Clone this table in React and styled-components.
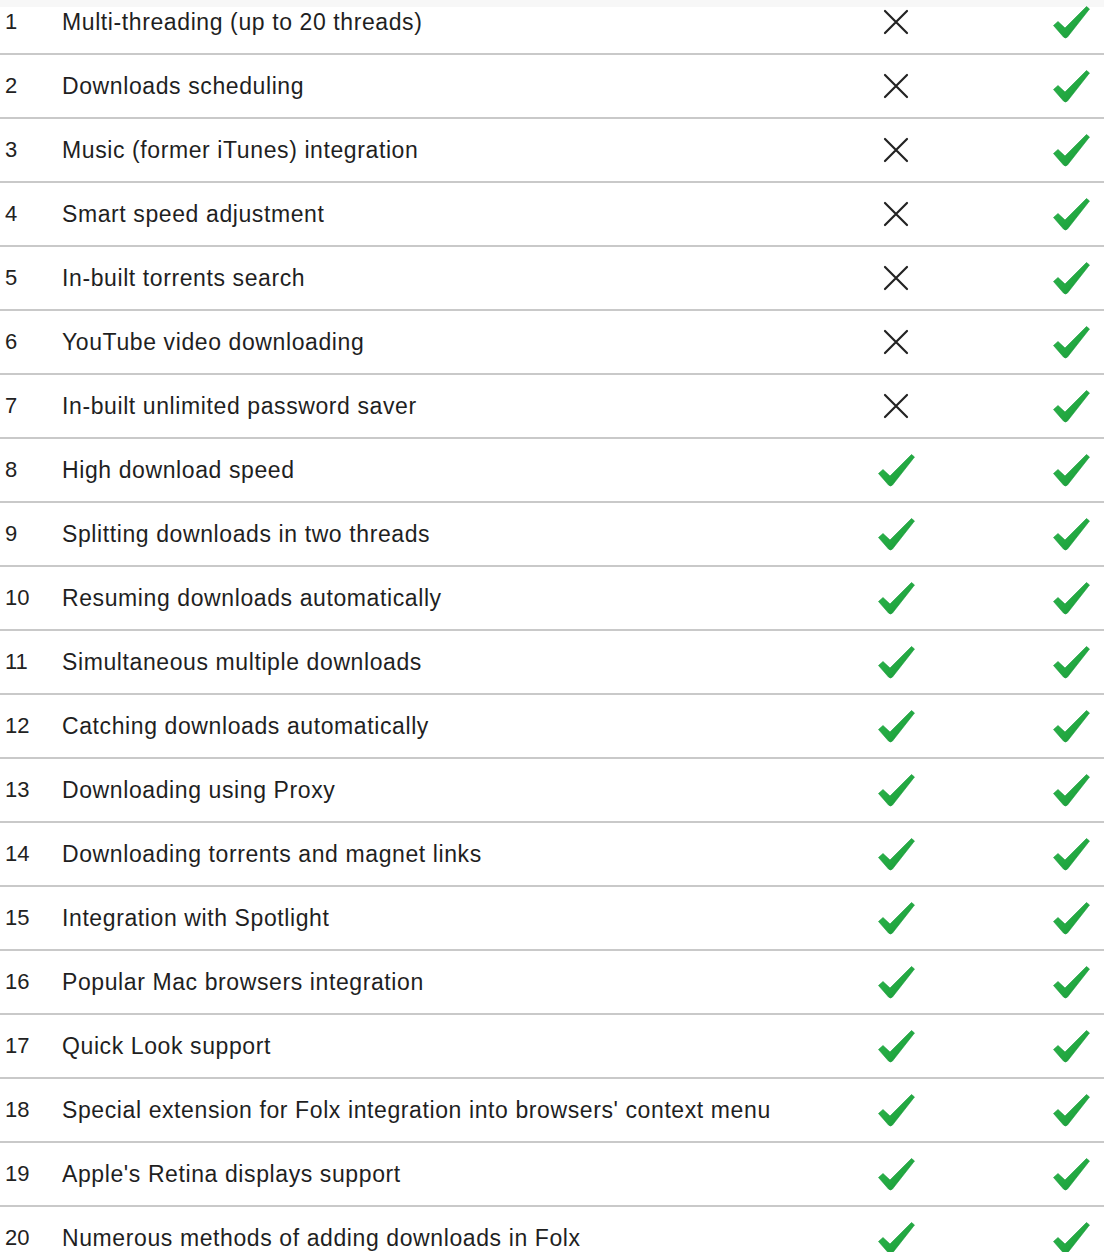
import React from 'react';
import styled, { createGlobalStyle } from 'styled-components';

const GlobalStyle = createGlobalStyle`
  html, body {
    margin: 0;
    padding: 0;
    background: #fff;
    overflow: hidden;
  }
  body {
    font-family: "Liberation Sans", Arial, sans-serif;
    color: #1f1f1f;
  }
`;

const Table = styled.div`
  margin-top: -9px;
  width: 1104px;
`;

const Row = styled.div`
  display: grid;
  grid-template-columns: 57px 1fr 110px 153px;
  align-items: center;
  height: 64px;
  box-sizing: border-box;
  padding-left: 5px;
  border-bottom: 2px solid #c9c9c9;
  background: ${p => (p.first ? 'linear-gradient(#f7f7f7 16px, #fff 16px)' : '#fff')};
`;

const Num = styled.div`
  font-size: 22px;
  color: #222;
`;

const Feature = styled.div`
  font-size: 23px;
  letter-spacing: 0.6px;
  color: #1f1f1f;
  white-space: nowrap;
`;

const IconCell = styled.div`
  display: flex;
  align-items: center;
  justify-content: ${p => (p.end ? 'flex-end' : 'center')};
  padding-right: ${p => (p.end ? '14px' : '0')};
`;

const Cross = () => (
  <svg width="26" height="26" viewBox="0 0 26 26">
    <path d="M2 2 L24 24 M24 2 L2 24" stroke="#222" strokeWidth="2.2" strokeLinecap="round" />
  </svg>
);

const Check = ({ id }) => (
  <svg width="37" height="33" viewBox="0 0 37 33">
    <defs>
      <linearGradient id={id} x1="0" y1="0" x2="1" y2="1">
        <stop offset="0" stopColor="#2fb84f" />
        <stop offset="0.55" stopColor="#22a841" />
        <stop offset="1" stopColor="#179336" />
      </linearGradient>
    </defs>
    <path
      d="M0.5 19.5 L5 15.5 L12 22 L33.5 0.5 L36.5 3 L14.5 31 Q12.5 33 10.5 31 Z"
      fill={`url(#${id})`}
      stroke="#1a9a3a"
      strokeWidth="0.6"
      strokeLinejoin="round"
    />
  </svg>
);

const features = [
  ['Multi-threading (up to 20 threads)', false],
  ['Downloads scheduling', false],
  ['Music (former iTunes) integration', false],
  ['Smart speed adjustment', false],
  ['In-built torrents search', false],
  ['YouTube video downloading', false],
  ['In-built unlimited password saver', false],
  ['High download speed', true],
  ['Splitting downloads in two threads', true],
  ['Resuming downloads automatically', true],
  ['Simultaneous multiple downloads', true],
  ['Catching downloads automatically', true],
  ['Downloading using Proxy', true],
  ['Downloading torrents and magnet links', true],
  ['Integration with Spotlight', true],
  ['Popular Mac browsers integration', true],
  ['Quick Look support', true],
  ["Special extension for Folx integration into browsers' context menu", true],
  ["Apple's Retina displays support", true],
  ['Numerous methods of adding downloads in Folx', true],
];

export default function App() {
  return (
    <>
      <GlobalStyle />
      <Table>
        {features.map(([name, free], i) => (
          <Row key={name} first={i === 0}>
            <Num>{i + 1}</Num>
            <Feature>{name}</Feature>
            <IconCell>{free ? <Check id={`a${i}`} /> : <Cross />}</IconCell>
            <IconCell end>
              <Check id={`b${i}`} />
            </IconCell>
          </Row>
        ))}
      </Table>
    </>
  );
}
